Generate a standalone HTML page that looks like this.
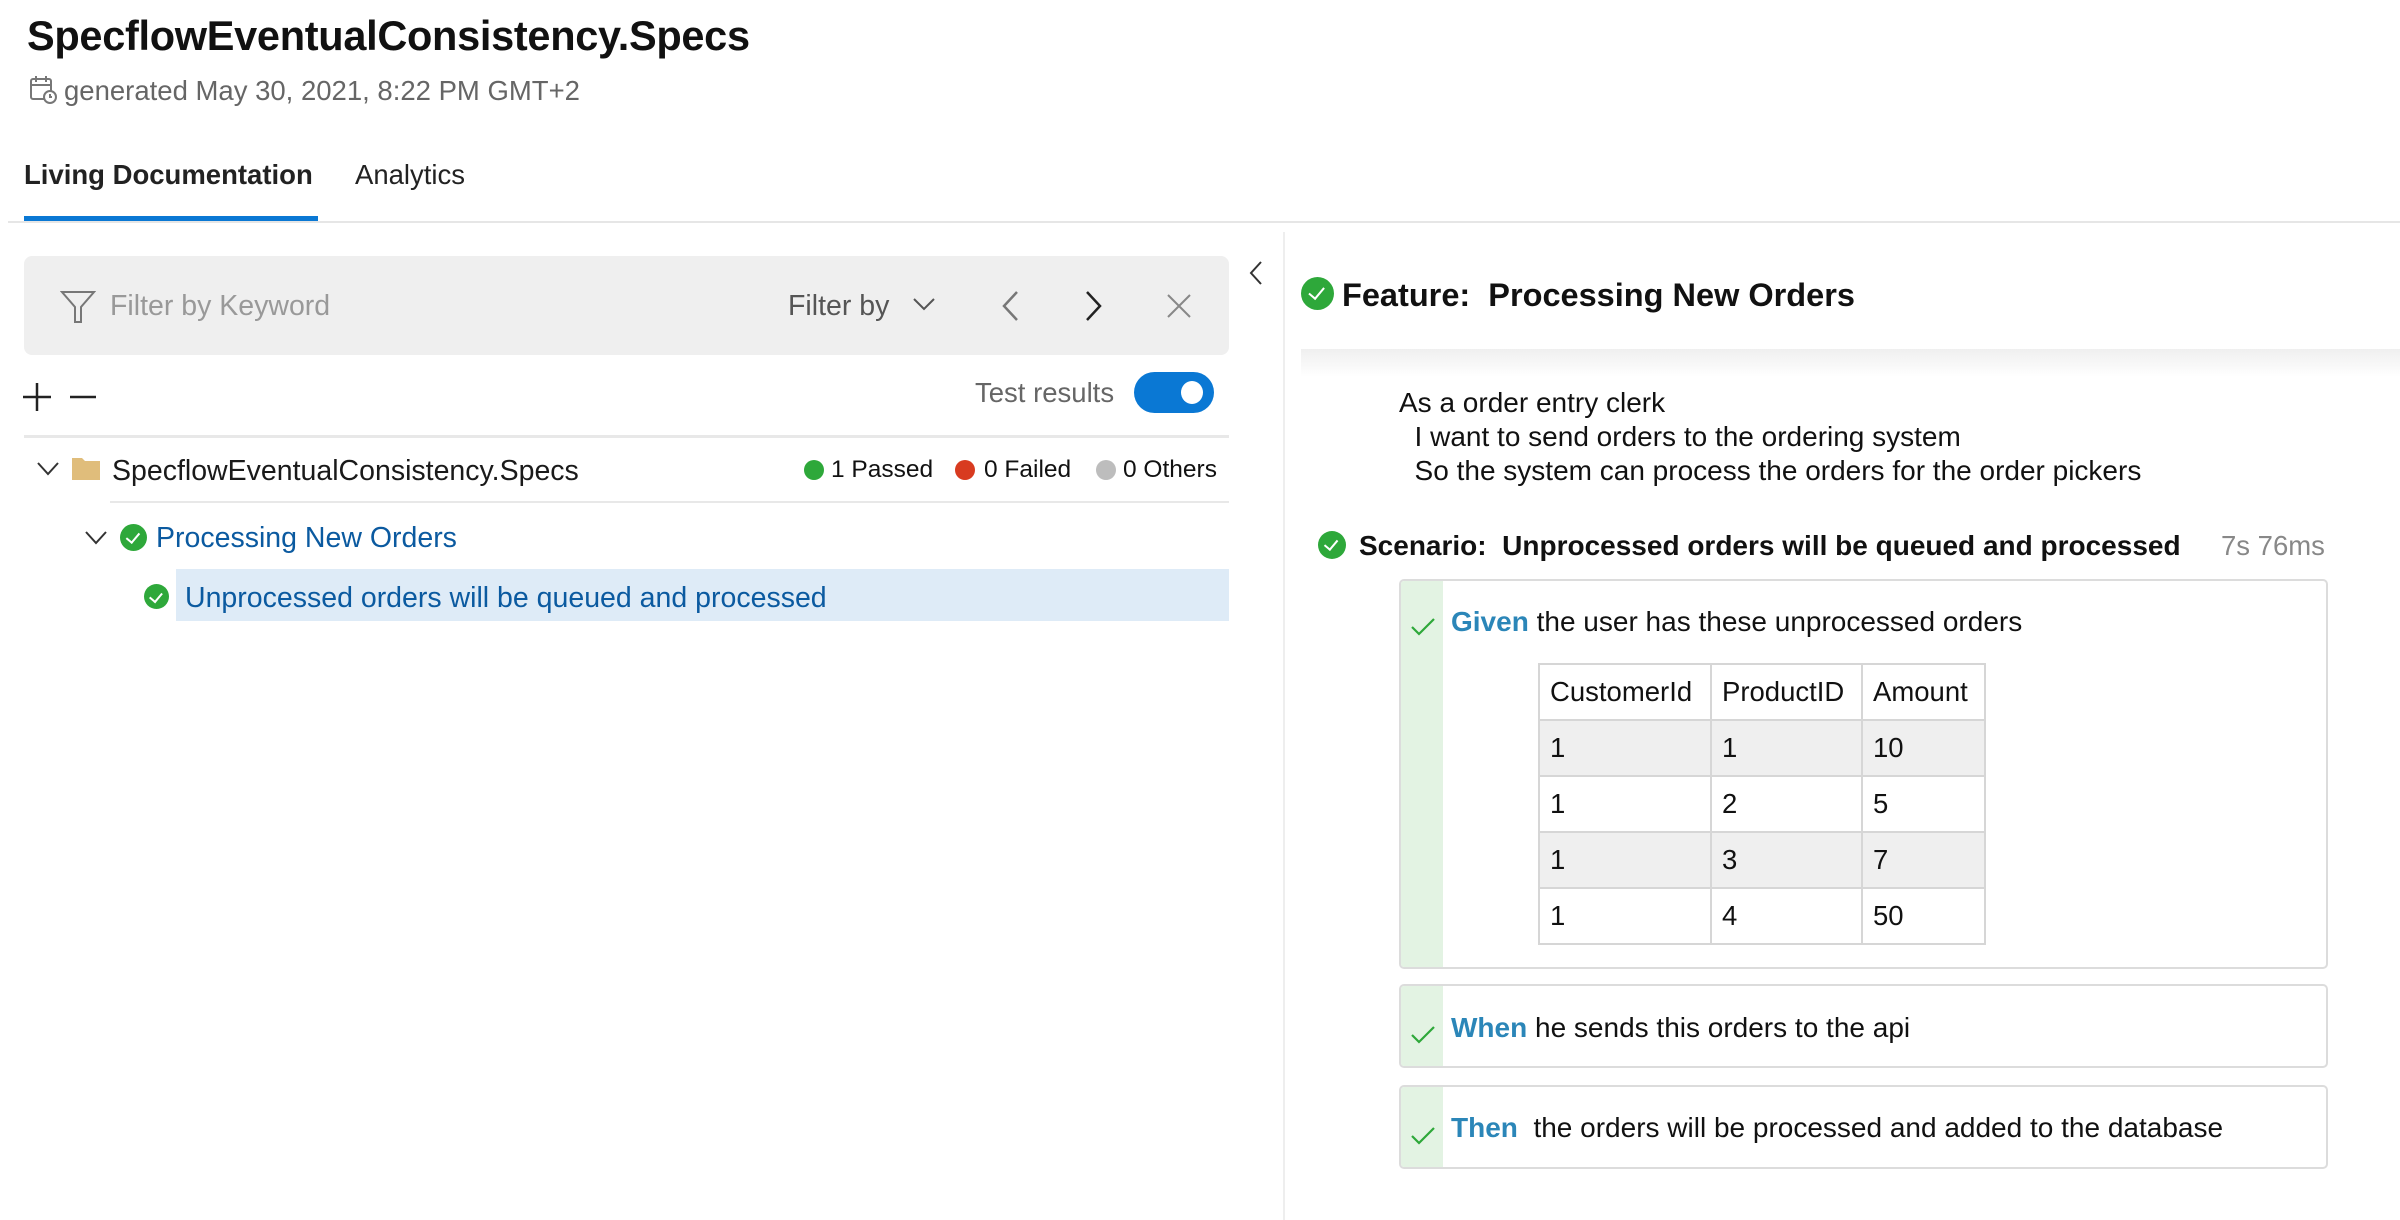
<!DOCTYPE html>
<html><head><meta charset="utf-8"><style>
*{margin:0;padding:0;box-sizing:border-box}
body{width:2400px;height:1220px;background:#fff;font-family:"Liberation Sans",sans-serif;color:#111;position:relative;overflow:hidden}
.a{position:absolute;white-space:nowrap}
.chk{position:absolute;border-radius:50%;background:#2ea83a}
.chk:after{content:"";position:absolute;left:33%;top:22%;width:22%;height:40%;border:solid #fff;border-width:0 2px 2px 0;transform:rotate(40deg)}
.box{position:absolute;left:1399px;width:929px;border:2px solid #dcdcdc;border-radius:5px;background:#fff;overflow:hidden}
.box .st{position:absolute;left:0;top:0;bottom:0;width:42px;background:#e3f3e3}
.tick{position:absolute;left:10px;width:24px;height:18px}
.kw{color:#2b86b8;font-weight:bold}
table{border-collapse:collapse;position:absolute;left:1538px;top:663px;font-size:27.5px}
td{border:2px solid #d6d6d6;height:56px;padding:0 10px}
tr:nth-child(2) td,tr:nth-child(4) td{background:#efefef}
</style></head><body>
<div class="a" style="left:27px;top:12px;font-size:41.5px;font-weight:bold;letter-spacing:-0.3px">SpecflowEventualConsistency.Specs</div>
<svg class="a" style="left:29px;top:75px" width="30" height="30" viewBox="0 0 30 30" fill="none" stroke="#777" stroke-width="2"><rect x="2" y="4" width="20" height="20" rx="2"/><path d="M2 10h20M7 1v6M17 1v6"/><circle cx="21" cy="22" r="6" fill="#fff"/><path d="M21 19v3h2"/></svg>
<div class="a" style="left:64px;top:75px;font-size:27.5px;color:#666">generated May 30, 2021, 8:22 PM GMT+2</div>
<div class="a" style="left:24px;top:159px;font-size:27.5px;font-weight:bold;color:#222">Living Documentation</div>
<div class="a" style="left:355px;top:159px;font-size:27.5px;color:#222">Analytics</div>
<div class="a" style="left:8px;top:221px;width:2392px;height:2px;background:#e6e6e6"></div>
<div class="a" style="left:24px;top:216px;width:294px;height:5px;background:#0a78d4"></div>

<div class="a" style="left:24px;top:256px;width:1205px;height:99px;background:#efefef;border-radius:8px"></div>
<svg class="a" style="left:60px;top:290px" width="36" height="34" viewBox="0 0 36 34" fill="none" stroke="#777" stroke-width="2"><path d="M2 2h32L21 17v15h-6V17z"/></svg>
<div class="a" style="left:110px;top:290px;font-size:28.5px;color:#999">Filter by Keyword</div>
<div class="a" style="left:788px;top:290px;font-size:28.5px;color:#555">Filter by</div>
<svg class="a" style="left:912px;top:296px" width="24" height="16" viewBox="0 0 24 16" fill="none" stroke="#555" stroke-width="2"><path d="M2 3l10 10 10-10"/></svg>
<svg class="a" style="left:1000px;top:290px" width="20" height="32" viewBox="0 0 20 32" fill="none" stroke="#777" stroke-width="2.5"><path d="M17 2L4 16l13 14"/></svg>
<svg class="a" style="left:1084px;top:290px" width="20" height="32" viewBox="0 0 20 32" fill="none" stroke="#222" stroke-width="2.5"><path d="M3 2l13 14L3 30"/></svg>
<svg class="a" style="left:1166px;top:293px" width="26" height="26" viewBox="0 0 26 26" fill="none" stroke="#888" stroke-width="2"><path d="M2 2l22 22M24 2L2 24"/></svg>
<svg class="a" style="left:1248px;top:260px" width="16" height="26" viewBox="0 0 16 26" fill="none" stroke="#333" stroke-width="2"><path d="M13 2L3 13l10 11"/></svg>
<div class="a" style="left:1283px;top:232px;width:2px;height:988px;background:#eeeeee"></div>

<svg class="a" style="left:22px;top:382px" width="80" height="30" viewBox="0 0 80 30" fill="none" stroke="#222" stroke-width="2.5"><path d="M15 1v28M1 15h28M48 15h26"/></svg>
<div class="a" style="left:975px;top:377px;font-size:27.5px;color:#666">Test results</div>
<div class="a" style="left:1134px;top:372px;width:80px;height:41px;border-radius:21px;background:#0a78d4"></div>
<div class="a" style="left:1181px;top:381px;width:22px;height:23px;border-radius:50%;background:#fff"></div>
<div class="a" style="left:24px;top:435px;width:1205px;height:3px;background:#e8e8e8"></div>

<svg class="a" style="left:36px;top:461px" width="24" height="16" viewBox="0 0 24 16" fill="none" stroke="#333" stroke-width="2"><path d="M2 2l10 11 10-11"/></svg>
<svg class="a" style="left:72px;top:456px" width="28" height="24" viewBox="0 0 28 24"><path d="M0 2h10l3 3h15v19H0z" fill="#e0bd7b"/></svg>
<div class="a" style="left:112px;top:455px;font-size:28.5px;color:#1a1a1a">SpecflowEventualConsistency.Specs</div>
<div class="a" style="left:804px;top:460px;width:20px;height:20px;border-radius:50%;background:#2ea83a"></div>
<div class="a" style="left:831px;top:456px;font-size:24.5px">1 Passed</div>
<div class="a" style="left:955px;top:460px;width:20px;height:20px;border-radius:50%;background:#d83b20"></div>
<div class="a" style="left:984px;top:456px;font-size:24.5px">0 Failed</div>
<div class="a" style="left:1096px;top:460px;width:20px;height:20px;border-radius:50%;background:#bdbdbd"></div>
<div class="a" style="left:1123px;top:456px;font-size:24.5px">0 Others</div>
<div class="a" style="left:110px;top:501px;width:1119px;height:2px;background:#e8e8e8"></div>

<svg class="a" style="left:84px;top:530px" width="24" height="16" viewBox="0 0 24 16" fill="none" stroke="#333" stroke-width="2"><path d="M2 2l10 11 10-11"/></svg>
<div class="chk" style="left:120px;top:524px;width:27px;height:27px"></div>
<div class="a" style="left:156px;top:522px;font-size:28.5px;color:#0b5aa0">Processing New Orders</div>
<div class="a" style="left:176px;top:569px;width:1053px;height:52px;background:#deebf7"></div>
<div class="chk" style="left:144px;top:584px;width:25px;height:25px"></div>
<div class="a" style="left:185px;top:582px;font-size:28.5px;color:#0b5aa0">Unprocessed orders will be queued and processed</div>

<div class="chk" style="left:1301px;top:277px;width:33px;height:33px"></div>
<div class="a" style="left:1342px;top:277px;font-size:32.5px;font-weight:bold">Feature:&nbsp; Processing New Orders</div>
<div class="a" style="left:1301px;top:349px;width:1099px;height:28px;background:linear-gradient(#efefef,#fff)"></div>
<div class="a" style="left:1399px;top:386px;font-size:28px;line-height:34px">As a order entry clerk<br>&nbsp; I want to send orders to the ordering system<br>&nbsp; So the system can process the orders for the order pickers</div>
<div class="chk" style="left:1318px;top:531px;width:28px;height:28px"></div>
<div class="a" style="left:1359px;top:530px;font-size:28px;font-weight:bold">Scenario:&nbsp; Unprocessed orders will be queued and processed</div>
<div class="a" style="left:2221px;top:530px;font-size:27.5px;color:#888">7s 76ms</div>

<div class="box" style="top:579px;height:390px"><div class="st"></div>
<svg class="tick" style="top:37px" viewBox="0 0 24 18" fill="none" stroke="#2ea83a" stroke-width="2.2"><path d="M1 9l7 7L23 1"/></svg></div>
<div class="a" style="left:1451px;top:606px;font-size:28px"><span class="kw">Given</span> the user has these unprocessed orders</div>
<table><tr><td style="width:172px">CustomerId</td><td style="width:151px">ProductID</td><td style="width:123px">Amount</td></tr>
<tr><td>1</td><td>1</td><td>10</td></tr><tr><td>1</td><td>2</td><td>5</td></tr><tr><td>1</td><td>3</td><td>7</td></tr><tr><td>1</td><td>4</td><td>50</td></tr></table>

<div class="box" style="top:984px;height:84px"><div class="st"></div>
<svg class="tick" style="top:40px" viewBox="0 0 24 18" fill="none" stroke="#2ea83a" stroke-width="2.2"><path d="M1 9l7 7L23 1"/></svg></div>
<div class="a" style="left:1451px;top:1012px;font-size:28px"><span class="kw">When</span> he sends this orders to the api</div>
<div class="box" style="top:1085px;height:84px"><div class="st"></div>
<svg class="tick" style="top:40px" viewBox="0 0 24 18" fill="none" stroke="#2ea83a" stroke-width="2.2"><path d="M1 9l7 7L23 1"/></svg></div>
<div class="a" style="left:1451px;top:1112px;font-size:28px"><span class="kw">Then</span>&nbsp; the orders will be processed and added to the database</div>
</body></html>
